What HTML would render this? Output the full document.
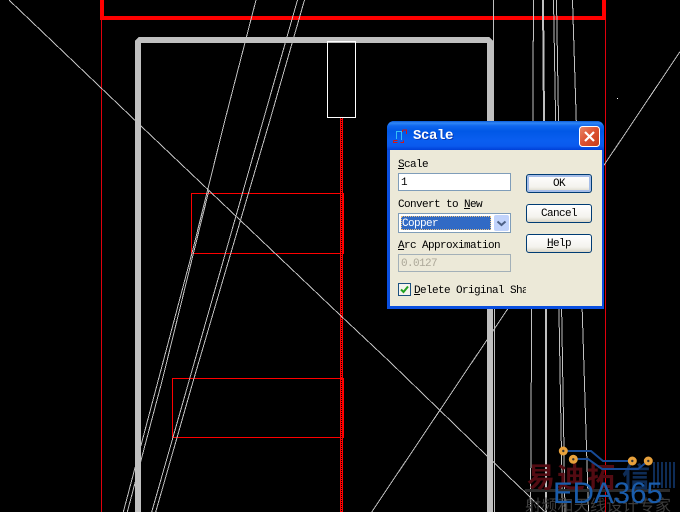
<!DOCTYPE html>
<html>
<head>
<meta charset="utf-8">
<style>
html,body{margin:0;padding:0;background:#000;width:680px;height:512px;overflow:hidden}
#c{position:absolute;left:0;top:0}
.a{position:absolute}
.t{position:absolute;font:11px/12px "Liberation Mono",monospace;letter-spacing:-.6px;color:#000;white-space:pre}
#dlg{position:absolute;left:387px;top:121px;width:217px;height:188px;background:#0a4fe0;border-radius:7px 7px 0 0;overflow:hidden}
#tb{position:absolute;left:0;top:0;width:217px;height:29px;background:linear-gradient(#0a5ad8 0,#2f86f5 2px,#0f66ee 5px,#0058e6 10px,#0a5ef0 20px,#0a5aee 25px,#0040d8 29px)}
#cl{position:absolute;left:3px;top:29px;width:212px;height:156px;background:#ece9d8}
.in{position:absolute;box-sizing:border-box;border:1px solid #7f9db9;background:#fff}
.b{position:absolute;left:526px;width:66px;box-sizing:border-box;border:1px solid #003c74;border-radius:3px;background:linear-gradient(#fff,#f4f3ee 70%,#d9d5c6);font:11px/18px "Liberation Mono",monospace;letter-spacing:-.6px;text-align:center;color:#000}
u{text-decoration:underline}
</style>
</head>
<body>
<svg id="c" width="680" height="512" viewBox="0 0 680 512">
 <g fill="none" shape-rendering="crispEdges">
  <path d="M101.5 18V512M605.5 18V512" stroke="#e0000c" stroke-width="1"/>
  <path d="M102 0V18H604V0" stroke="#f00" stroke-width="4"/>
  <path d="M138 512V42L140 40H488L490 42V512" stroke="#c0c0c0" stroke-width="6"/>
  <rect x="340" y="118" width="3" height="394" fill="#f00"/>
  <path d="M341.5 118V512" stroke="#000" stroke-dasharray="1 1"/>
  <rect x="191.5" y="193.5" width="152" height="60" stroke="#f00"/>
  <rect x="172.5" y="378.5" width="171" height="59" stroke="#f00"/>
  <rect x="327.5" y="41.5" width="28" height="76" stroke="#fff"/>
  <g stroke="#c0c0c0" stroke-width="1">
   <path d="M256 0L225 120L192 253L158.3 380L123.3 512"/>
   <path d="M209 190L162.3 380L127.3 512"/>
   <path d="M297.5 0L263.3 120L189.3 380L151.7 512"/>
   <path d="M304.5 0L270 120L193.5 380L155.7 512"/>
   <path d="M9 0L141 126L340 315L390 362L486.7 455.7L528 495L545 512"/>
   <path d="M680 51.7L371.7 512"/>
   <path d="M493.5 0V150M494.5 150V512"/>
   <path d="M533.5 0L530.5 512"/>
   <path d="M553.5 0L562.5 512"/>
   <path d="M556.5 0L565 512"/>
   <path d="M572.5 0L588.5 512"/>
  </g>
  <path d="M543 0L544 120L546 300V512" stroke="#c0c0c0" stroke-width="2"/>
  <rect x="617" y="98" width="1" height="1" fill="#fff"/>
 </g>
 <!-- watermark -->
 <g>
  <rect x="525" y="489" width="145" height="3" fill="#2a2a2a"/>
  <g fill="#0e2c56">
   <rect x="653" y="462" width="2" height="26"/><rect x="657" y="462" width="2" height="26"/><rect x="661" y="462" width="2" height="26"/><rect x="665" y="462" width="2" height="26"/><rect x="669" y="462" width="2" height="26"/><rect x="673" y="462" width="2" height="26"/>
  </g>
  <text x="527" y="487" font-family="'Liberation Sans','Noto Sans CJK SC',sans-serif" font-size="28" font-weight="700" fill="#520b12" textLength="88">易迪拓</text>
  <text x="622" y="487" font-family="'Liberation Sans','Noto Sans CJK SC',sans-serif" font-size="28" font-weight="700" fill="#0e2c56">信</text>
  <text x="525" y="511" font-family="'Liberation Sans','Noto Sans CJK SC',sans-serif" font-size="16" fill="#3c3c3c" textLength="146">射频和天线设计专家</text>
  <text x="553" y="503" font-family="'Liberation Sans',sans-serif" font-size="29.5" fill="#1a5cab">EDA365</text>
  <path d="M563 451H591L603 461H632M573 459H588L602 469H638L648 461" fill="none" stroke="#174a96" stroke-width="2"/>
  <g fill="#e8a13c">
   <circle cx="563.3" cy="451" r="4.5"/><circle cx="573.3" cy="459.3" r="4.5"/><circle cx="632.3" cy="461" r="4.5"/><circle cx="648.3" cy="461" r="4.5"/>
  </g>
  <g fill="#333">
   <circle cx="563.3" cy="451" r="1.2"/><circle cx="573.3" cy="459.3" r="1.2"/><circle cx="632.3" cy="461" r="1.2"/><circle cx="648.3" cy="461" r="1.2"/>
  </g>
 </g>
</svg>

<div id="dlg">
 <div id="tb"></div>
 <div id="cl"></div>
</div>

<svg class="a" style="left:393px;top:129px" width="14" height="14" viewBox="0 0 14 14" shape-rendering="crispEdges" fill="none">
 <path d="M3.5 2V10M3.5 2.5H8.5V11" stroke="#35c0f5"/>
 <path d="M9.5 1H13.5V5M9.5 1V3" stroke="#d01818"/>
 <path d="M0.5 11.5H4.5M0.5 11.5V13.5H4.5M7.5 13.5H10.5V11.5" stroke="#d01818"/>
</svg>

<div class="t" style="left:413px;top:129px;font:bold 14px/15px 'Liberation Mono',monospace;letter-spacing:-.4px;color:#fff;text-shadow:1px 1px 0 #0a3ab0">Scale</div>

<svg class="a" style="left:579px;top:126px" width="21" height="21" viewBox="0 0 21 21">
 <defs><linearGradient id="g" x1="0" y1="0" x2="1" y2="1"><stop offset="0" stop-color="#e8886a"/><stop offset=".5" stop-color="#dc5030"/><stop offset="1" stop-color="#c83c18"/></linearGradient></defs>
 <rect x=".5" y=".5" width="20" height="20" rx="3" fill="url(#g)" stroke="#fff"/>
 <path d="M6 6L15 15M15 6L6 15" stroke="#fff" stroke-width="2.2"/>
</svg>

<div class="t" style="left:398px;top:159px"><u>S</u>cale</div>
<div class="in" style="left:398px;top:173px;width:113px;height:18px"></div>
<div class="t" style="left:401px;top:177px">1</div>

<div class="t" style="left:398px;top:199px">Convert to <u>N</u>ew</div>
<div class="in" style="left:398px;top:213px;width:113px;height:20px"></div>
<div class="a" style="left:401px;top:216px;width:90px;height:14px;box-sizing:border-box;background:#316ac5;border:1px dotted #e8c080"></div>
<div class="t" style="left:402px;top:218px;color:#fff">Copper</div>
<div class="a" style="left:494px;top:215px;width:15px;height:16px;background:#c1d3fb;border-radius:2px"></div>
<svg class="a" style="left:494px;top:215px" width="15" height="16" viewBox="0 0 15 16"><path d="M3.5 6.5L7.5 10L11.5 6.5" fill="none" stroke="#4d6185" stroke-width="2"/></svg>

<div class="t" style="left:398px;top:240px"><u>A</u>rc Approximation</div>
<div class="in" style="left:398px;top:254px;width:113px;height:18px;background:#ece9d8;border-color:#a3b0b8"></div>
<div class="t" style="left:401px;top:258px;color:#aca899">0.0127</div>

<div class="a" style="left:398px;top:283px;width:13px;height:13px;box-sizing:border-box;border:1px solid #1c5180;background:#f4f3ee"></div>
<svg class="a" style="left:398px;top:283px" width="13" height="13" viewBox="0 0 13 13"><path d="M3 6.5L5.5 9L10 3.5" fill="none" stroke="#21a121" stroke-width="2"/></svg>
<div class="t" style="left:414px;top:285px;width:112px;overflow:hidden"><u>D</u>elete Original Shape</div>

<div class="b" style="top:174px;height:19px;box-shadow:inset 0 0 0 2px #a6bde8">OK</div>
<div class="b" style="top:204px;height:19px">Cancel</div>
<div class="b" style="top:234px;height:19px"><u>H</u>elp</div>
</body>
</html>
